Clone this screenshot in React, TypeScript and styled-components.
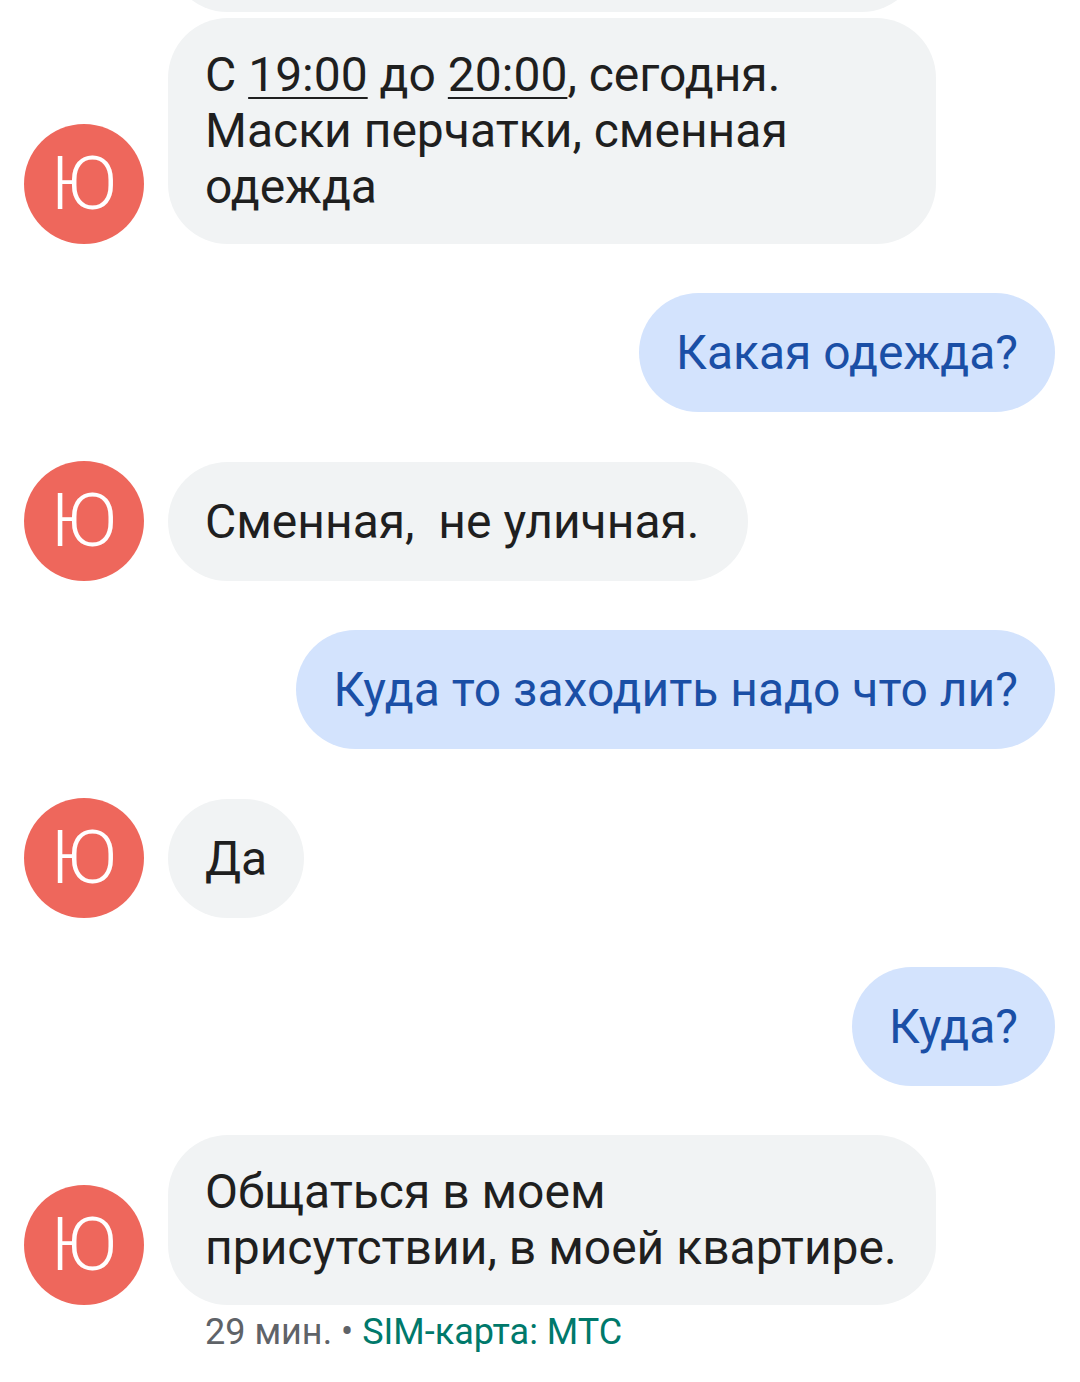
import React from "react";
import styled, { createGlobalStyle } from "styled-components";

const Global = createGlobalStyle`
  html, body { margin: 0; padding: 0; background: #ffffff; }
  body { font-family: Roboto, "Noto Sans", sans-serif; -webkit-font-smoothing: antialiased; }
`;

const Thread = styled.div`
  width: 1080px;
  height: 1382px;
  overflow: hidden;
  display: flex;
  flex-direction: column;
  gap: 49px;
  padding: 0 25px 0 24px;
  box-sizing: border-box;
`;

const Row = styled.div<{ $out?: boolean; $peek?: boolean }>`
  display: flex;
  align-items: flex-end;
  justify-content: ${(p) => (p.$out ? "flex-end" : "flex-start")};
  gap: 24px;
  margin-top: ${(p) => (p.$peek ? "-107px" : "0")};
  margin-bottom: ${(p) => (p.$peek ? "-43px" : "0")};
`;

const Block = styled.div`
  display: flex;
  flex-direction: column;
  gap: 6px;
`;

const Avatar = styled.div`
  flex: 0 0 120px;
  width: 120px;
  height: 120px;
  border-radius: 50%;
  background: #ee675c;
  color: #ffffff;
  display: flex;
  align-items: center;
  justify-content: center;
  font-family: Roboto, sans-serif;
  font-weight: 300;
  font-size: 74px;
  line-height: 1;
`;

const Spacer = styled.div`
  flex: 0 0 120px;
  width: 120px;
`;

const Bubble = styled.div<{ $out?: boolean; $width?: number }>`
  box-sizing: border-box;
  max-width: 768px;
  min-height: 119px;
  ${(p) => (p.$width ? `width: ${p.$width}px;` : "")}
  display: flex;
  align-items: center;
  padding: 29px 37px;
  border-radius: 60px;
  background: ${(p) => (p.$out ? "#d3e3fd" : "#f1f3f4")};
  color: ${(p) => (p.$out ? "#1a4fa6" : "#1f1f1f")};
  font-family: Roboto, sans-serif;
  font-size: 48px;
  line-height: 56px;
`;

const Text = styled.div`
  white-space: pre-wrap;
`;

const Time = styled.span`
  text-decoration: underline;
  text-decoration-thickness: 2px;
  text-underline-offset: 6px;
`;

const Meta = styled.div`
  padding-left: 181px;
  font-family: Roboto, sans-serif;
  font-size: 36px;
  line-height: 42px;
  color: #5f6368;
`;

const Sim = styled.span`
  color: #00796b;
`;

export default function App() {
  return (
    <>
      <Global />
      <Thread>
        <Row $peek>
          <Spacer />
          <Bubble $width={753}>
            <Text>{"\u00a0"}</Text>
          </Bubble>
        </Row>
        <Row>
          <Avatar>Ю</Avatar>
          <Bubble>
            <Text>
              С <Time>19:00</Time> до <Time>20:00</Time>, сегодня.{"\n"}Маски перчатки, сменная одежда
            </Text>
          </Bubble>
        </Row>
        <Row $out>
          <Bubble $out>
            <Text>Какая одежда?</Text>
          </Bubble>
        </Row>
        <Row>
          <Avatar>Ю</Avatar>
          <Bubble>
            <Text>{"Сменная,  не уличная.\u00a0"}</Text>
          </Bubble>
        </Row>
        <Row $out>
          <Bubble $out>
            <Text>Куда то заходить надо что ли?</Text>
          </Bubble>
        </Row>
        <Row>
          <Avatar>Ю</Avatar>
          <Bubble>
            <Text>Да</Text>
          </Bubble>
        </Row>
        <Row $out>
          <Bubble $out>
            <Text>Куда?</Text>
          </Bubble>
        </Row>
        <Block>
          <Row>
            <Avatar>Ю</Avatar>
            <Bubble>
              <Text>Общаться в моем присутствии, в моей квартире.</Text>
            </Bubble>
          </Row>
          <Meta>
            29 мин. • <Sim>SIM-карта: МТС</Sim>
          </Meta>
        </Block>
      </Thread>
    </>
  );
}
